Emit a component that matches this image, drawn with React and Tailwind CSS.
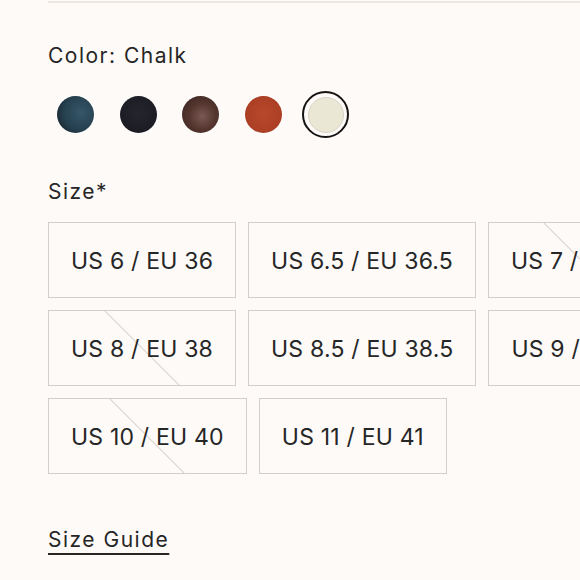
import React from 'react';

const swatches = [
    { name: 'Navy', className: 'bg-[radial-gradient(circle_at_65%_45%,#36566a_0%,#26404f_55%,#111a20_100%)]' },
    { name: 'Black', className: 'bg-[radial-gradient(circle_at_50%_45%,#24252d_0%,#1c1d24_70%,#121318_100%)]' },
    { name: 'Chestnut', className: 'bg-[radial-gradient(circle_at_55%_55%,#7a5854_0%,#55362f_45%,#34211e_100%)]' },
    { name: 'Rust', className: 'bg-[radial-gradient(circle_at_50%_50%,#b9482b_0%,#ab3f24_70%,#8e3019_100%)]' },
    { name: 'Chalk', className: 'bg-[#ebe7d5]', selected: true },
];

const sizes = [
    { label: 'US 6 / EU 36' },
    { label: 'US 6.5 / EU 36.5' },
    { label: 'US 7 / EU 37', disabled: true },
    { label: 'US 7.5 / EU 37.5' },
    { label: 'US 8 / EU 38', disabled: true },
    { label: 'US 8.5 / EU 38.5' },
    { label: 'US 9 / EU 39' },
    { label: 'US 9.5 / EU 39.5' },
    { label: 'US 10 / EU 40', disabled: true },
    { label: 'US 11 / EU 41' },
];

const Swatch = ({ swatch }) => (
    <div className="w-[55px] h-[55px] flex items-center justify-center">
        {swatch.selected ? (
            <div className="w-[47px] h-[47px] rounded-full border-2 border-[#141414] flex items-center justify-center">
                <div className={`w-[36px] h-[36px] rounded-full border border-[#d6d3c7] ${swatch.className}`} />
            </div>
        ) : (
            <div className={`w-[37px] h-[37px] rounded-full shadow-[0_0_1px_1px_rgba(255,255,255,0.6)] ${swatch.className}`} />
        )}
    </div>
);

const SizeButton = ({ size }) => (
    <div className="relative overflow-hidden h-[76px] px-[22px] pt-[2px] flex items-center border-[1.5px] border-[#d3cec9] text-[23px] leading-7 tracking-[0.2px] whitespace-nowrap">
        {size.disabled && (
            <div className="absolute left-1/2 top-1/2 w-px h-[108px] bg-[#d6d1cc] -translate-x-1/2 -translate-y-1/2 -rotate-45" />
        )}
        <span className="relative">{size.label}</span>
    </div>
);

export default function App() {
    return (
        <div
            className="w-[580px] h-[580px] overflow-hidden bg-[#fdfaf8] text-[#262626]"
            style={{ fontFamily: 'Inter, "Liberation Sans", sans-serif' }}
        >
            <div className="pl-[48px]">
                <div className="mt-[1px] h-[2px] bg-[#ede7e1]" />

                <div className="mt-[39px] text-[21px] leading-7 tracking-[1.5px]">Color: Chalk</div>

                <div className="mt-[17px] flex gap-[7.5px]">
                    {swatches.map((s) => (
                        <Swatch key={s.name} swatch={s} />
                    ))}
                </div>

                <div className="mt-[36px] text-[21px] leading-7 tracking-[1.5px]">Size*</div>

                <div className="mt-[16px] w-[940px] flex flex-wrap gap-[12px]">
                    {sizes.map((s) => (
                        <SizeButton key={s.label} size={s} />
                    ))}
                </div>

                <div className="mt-[52px] text-[21px] leading-7 tracking-[1.5px]">
                    <span className="underline decoration-2 underline-offset-[6px]">Size Guide</span>
                </div>
            </div>
        </div>
    );
}
